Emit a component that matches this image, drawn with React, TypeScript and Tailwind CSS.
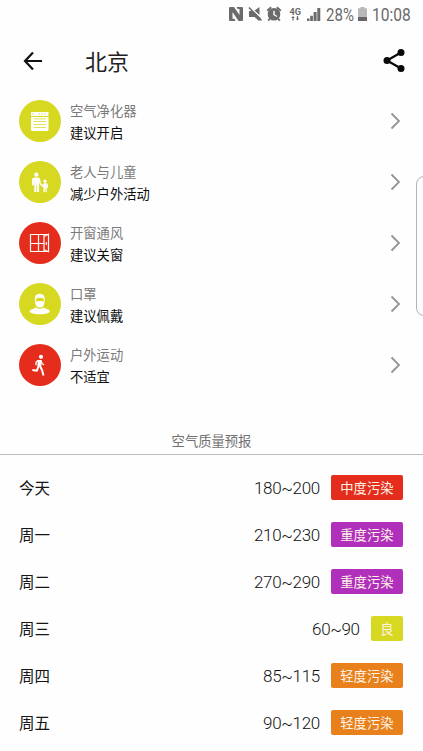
import React from "react";

const PurifierIcon = () => (
    <svg className="size-[42px]" viewBox="0 0 42 42" fill="#fff">
        <path fillRule="evenodd" d="M12 12h17.500v4H12zM13.500 13.500v1h1.300v-1zM19.700 13.500v1H21v-1zM22.500 13.500v1h1.300v-1zM25.500 13.500v1h1.300v-1z" />
        <path fillRule="evenodd" d="M12 17h17.500v12.500q0 1.500-1.500 1.500H13.500q-1.500 0-1.500-1.500zM14.500 18.500v.8H27v-.8zM14.500 21v.8H27V21zM14.500 24v.8H27V24zM14.500 27v.8H27V27z" />
    </svg>
);

const FamilyIcon = () => (
    <svg className="size-[42px]" viewBox="0 0 42 42" fill="#fff">
        <circle cx="17.300" cy="13.700" r="2.100" />
        <path d="M15 16.400h4.600q1 0 1.300 1l1.200 5.600 1.900 1.300-.6 1-2.500-1.500-.8-3V31h-2.100v-6.800h-.6V31h-2.100V19.600l-.6 5H13v-5.700q0-2.500 2-2.500z" />
        <circle cx="26" cy="20.200" r="1.600" />
        <path d="M24.900 22.300h2.400q1.700 0 1.700 1.900V27h-1v-2h-.3v6.200h-1.300v-3.600h-.7v3.600h-1.300v-6l-1.200.7-.7-.9z" />
    </svg>
);

const WindowIcon = () => (
    <svg className="size-[42px]" viewBox="0 0 42 42" fill="none" stroke="#fff" strokeWidth="1.200">
        <path d="M29.500 12.500h-18v17h18M19.500 12.500v17M11.500 21.500h13.500" />
        <path d="M29.500 12.300v17.400l-4.500-2V14.500zM25 12.500v2M25 27.500v2M27.300 20v3" />
    </svg>
);

const MaskIcon = () => (
    <svg className="size-[42px]" viewBox="0 0 42 42" fill="#fff">
        <path d="M16 18.800q-1.400-8 4.700-8 6 0 4.900 7.600l-.8-.4q0-2.500-1-3.200-3.500.4-5.200-.4-1.500 1-1.600 4.200z" />
        <path d="M16 18.800q4.800-1.300 9.700-.2-.3 3-1.400 4.400-1.500 1.600-3.500 1.600-1.900 0-3.400-1.600Q16.200 21.500 16 18.800z" />
        <path d="M16.800 24.200q3.900 3 7.900 0 .6 1.200 3 1.800 3.300 1 3.300 3-3.500 2.300-10.200 2.300T10.500 29q0-2 3.300-3 2.400-.6 3-1.800z" />
    </svg>
);

const RunnerIcon = () => (
    <svg className="size-[42px]" viewBox="0 0 42 42" fill="none" stroke="#fff" strokeLinejoin="round">
        <circle cx="22" cy="12.800" r="2.100" fill="#fff" stroke="none" />
        <path d="M20.700 16l-.3 6" strokeWidth="4" />
        <path d="M19.300 16.200l-2.300 2v3M22.200 17.300l1 2.400 1.800 1" strokeWidth="1.300" />
        <path d="M19.600 22l-1.700 4.700-4.500-.7M21 22l2 4 1.500 5.600" strokeWidth="2" />
    </svg>
);

const StatusBar = () => (
    <div className="h-[30px] flex items-center text-[#6b6b6b] pl-[229px]">
        <svg className="w-[97px] h-[30px] shrink-0" viewBox="229 0 97 30" fill="currentColor">
            <path d="M230 7h4l5.500 8V9h-1.800L236.500 7H242q1 0 1 1v12q0 1-1 1h-3.500l-6-9v6.800h2l1 2.200H230q-1 0-1-1V8q0-1 1-1z" />
            <path d="M249 11h4l8 7.500L259 21l-4.500-4H249zM254.500 10.500L259.500 7v8z" />
            <path d="M249 7.500l12.500 13" stroke="currentColor" strokeWidth="1.600" />
            <path fillRule="evenodd" d="M274 8a6.300 6.300 0 1 1 0 12.600A6.300 6.300 0 0 1 274 8zM273.300 10.800v4.200l3.500 2 .6-1-2.700-1.600v-3.600z" />
            <path d="M267.200 10.700l4-3.400M280.800 10.700l-4-3.400M270 18.500l-1.800 2.200M278 18.500l1.800 2.200" stroke="currentColor" strokeWidth="1.900" />
            <text x="289.500" y="15" fontSize="8.500" fontWeight="700" textLength="11.500" lengthAdjust="spacingAndGlyphs" className="font-[Roboto]">4G</text>
            <path d="M293 16l1.800 2h-1.200v2.500h-1.200V18h-1.200zM297.500 20.500l-1.800-2h1.200V16h1.200v2.500h1.200z" />
            <path d="M307 18.500h2.500V21H307zM310.200 15.700h2.700V21h-2.700zM313.600 12h3V21h-3zM317.300 8h3V21h-3z" />
        </svg>
        <span className="w-8 shrink-0 font-[Roboto] text-[17.5px] leading-6 origin-left scale-x-[0.86]">28%</span>
        <svg className="w-[9px] h-[14px] shrink-0 -mt-0.5" viewBox="0 0 9 14">
            <path d="M2.500 0h4v1.200H9V14H0V1.200h2.500z" fill="#b9b9b9" />
            <path d="M0 10h9v4H0z" fill="#666" />
        </svg>
        <span className="ml-[5px] w-12 shrink-0 font-[Roboto] text-[17.5px] leading-6 origin-left scale-x-[0.89]">10:08</span>
    </div>
);

const Header = () => (
    <header className="h-[60px] flex items-center pl-[23px] pr-[18px]">
        <svg className="w-5 h-5" viewBox="0 0 20 20" fill="none" stroke="#111" strokeWidth="2.200">
            <path d="M10 2.500L2 11l8 8.500M1.700 11H19" />
        </svg>
        <h1 className="ml-[42px] text-[22px] leading-8 text-[#222]">北京</h1>
        <svg className="ml-auto w-[22px] h-6" viewBox="0 0 22 24" fill="#080808">
            <path d="M18 4.500L4 12.500l14 8" fill="none" stroke="#080808" strokeWidth="2.200" />
            <circle cx="4" cy="12.500" r="3.500" />
            <circle cx="18" cy="4.500" r="3.500" />
            <circle cx="18" cy="20.500" r="3.500" />
        </svg>
    </header>
);

const tips = [
    { title: "空气净化器", advice: "建议开启", color: "bg-[#d7d821]", icon: <PurifierIcon /> },
    { title: "老人与儿童", advice: "减少户外活动", color: "bg-[#d7d821]", icon: <FamilyIcon /> },
    { title: "开窗通风", advice: "建议关窗", color: "bg-[#e52d1d]", icon: <WindowIcon /> },
    { title: "口罩", advice: "建议佩戴", color: "bg-[#d7d821]", icon: <MaskIcon /> },
    { title: "户外运动", advice: "不适宜", color: "bg-[#e52d1d]", icon: <RunnerIcon /> },
];

const forecast = [
    { day: "今天", range: "180~200", level: "中度污染", color: "bg-[#e52d1d]" },
    { day: "周一", range: "210~230", level: "重度污染", color: "bg-[#b02fbb]" },
    { day: "周二", range: "270~290", level: "重度污染", color: "bg-[#b02fbb]" },
    { day: "周三", range: "60~90", level: "良", color: "bg-[#d7d821]" },
    { day: "周四", range: "85~115", level: "轻度污染", color: "bg-[#e8801c]" },
    { day: "周五", range: "90~120", level: "轻度污染", color: "bg-[#e8801c]" },
];

const App = () => {
    return (
        <main className="relative w-[423px] h-[751px] overflow-hidden bg-[#fefefe] font-['Noto_Sans_CJK_SC',sans-serif]">
            <StatusBar />
            <Header />
            <ul>
                {tips.map((tip) => (
                    <li key={tip.title} className="h-[61px] flex items-center pl-[19px] pr-[22px]">
                        <div className={`size-[42px] rounded-full shrink-0 ${tip.color}`}>{tip.icon}</div>
                        <div className="ml-[9px] pt-0.5 flex flex-col text-[13.3px] leading-[22px]">
                            <span className="text-[#7a7a7a]">{tip.title}</span>
                            <span className="text-[#0c0c0c]">{tip.advice}</span>
                        </div>
                        <svg className="ml-auto w-[11px] h-[18px]" viewBox="0 0 11 18" fill="none" stroke="#949494" strokeWidth="1.800">
                            <path d="M1.500 1.500L9 9l-7.500 7.500" />
                        </svg>
                    </li>
                ))}
            </ul>
            <h2 className="mt-[36px] h-[24px] border-b border-[#bdbdbd] text-center text-[13.3px] leading-[20px] text-[#707070]">
                空气质量预报
            </h2>
            <ul className="mt-[9px]">
                {forecast.map((item) => (
                    <li key={item.day} className="h-[47px] flex items-center pl-[19px] pr-5">
                        <span className="-mt-0.5 text-[15.5px] leading-6 text-[#151515]">{item.day}</span>
                        <span className="ml-auto font-[Roboto] font-light text-[17px] leading-6 tracking-[-0.35px] text-[#111]">{item.range}</span>
                        <span className={`ml-[11px] h-[25px] px-[9.5px] rounded-[2px] text-[13.3px] leading-[25px] text-[#fdf3e6] ${item.color}`}>
                            {item.level}
                        </span>
                    </li>
                ))}
            </ul>
            {/* edge panel handle */}
            <div className="absolute left-[416px] top-[176px] w-4 h-[140px] rounded-lg border border-[#b5b5b5] bg-[#fcfcfc]" />
        </main>
    );
};

export default App;
